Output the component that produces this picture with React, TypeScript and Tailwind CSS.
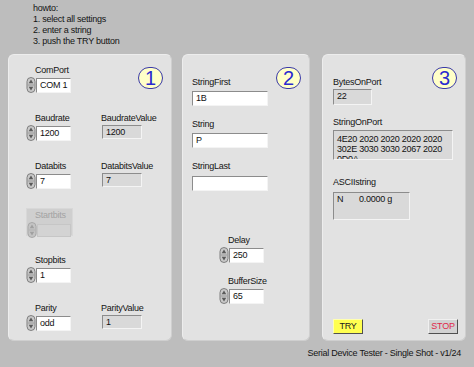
import React from 'react';

// Small LabVIEW-like increment/decrement arrows
function Spin({ dim = false }: { dim?: boolean }) {
    return (
        <svg width="10" height="16" viewBox="0 0 10 16" className="shrink-0">
            <rect x="1" y="0.5" width="8" height="15" rx="4" fill={dim ? '#c4c4c4' : '#c9c9c9'} stroke={dim ? '#a8a8a8' : '#7e7e7e'} />
            <path d="M5 2.5 L7.3 6.3 H2.7 Z" fill={dim ? '#a0a0a0' : '#5a5a5a'} />
            <path d="M5 13.5 L7.3 9.7 H2.7 Z" fill={dim ? '#a0a0a0' : '#5a5a5a'} />
            <line x1="2" y1="8" x2="8" y2="8" stroke={dim ? '#b0b0b0' : '#9a9a9a'} />
        </svg>
    );
}

function Label({ children, className = '' }: { children: React.ReactNode; className?: string }) {
    return <div className={`h-[11px] leading-[11px] whitespace-nowrap text-[#141414] ${className}`}>{children}</div>;
}

// sunken control / indicator box
function Box({ value = '', w, h = 15, gray = false }: { value?: string; w: number; h?: number; gray?: boolean }) {
    return (
        <div
            className={`border border-t-[#8c8c8c] border-l-[#8c8c8c] border-b-[#f4f4f4] border-r-[#f4f4f4] pl-[3px] leading-[13px] text-[#111] whitespace-pre overflow-hidden ${gray ? 'bg-[#d9d9d9]' : 'bg-white'}`}
            style={{ width: w, height: h }}
        >
            {value}
        </div>
    );
}

function NumCtl({ label, value }: { label: string; value: string }) {
    return (
        <div className="flex flex-col w-[75px]">
            <Label className="ml-[9px]">{label}</Label>
            <div className="flex items-center mt-[1px]">
                <Spin />
                <Box value={value} w={35} />
            </div>
        </div>
    );
}

function Indicator({ label, value }: { label: string; value: string }) {
    return (
        <div className="flex flex-col">
            <Label>{label}</Label>
            <div className="mt-[1px] ml-[1px]">
                <Box value={value} w={40} h={14} gray />
            </div>
        </div>
    );
}

function Badge({ n }: { n: string }) {
    return (
        <div className="absolute top-[12px] right-[8px] w-[25px] h-[22px] rounded-full bg-[#ffffc8] border-[1.5px] border-[#3a3aa8] flex items-center justify-center text-[20px] leading-none tracking-normal text-[#2a2ad0] font-['Liberation_Sans',sans-serif]">
            {n}
        </div>
    );
}

function Panel({ children, className = '' }: { children: React.ReactNode; className?: string }) {
    return (
        <div className={`relative h-[287px] shrink-0 rounded-[6px] bg-[#e2e2e2] border border-t-[#ededed] border-l-[#ededed] border-b-[#cfcfcf] border-r-[#cfcfcf] ${className}`}>
            {children}
        </div>
    );
}

export default function App() {
    return (
        <div className="w-[474px] h-[367px] bg-[#bdbdbd] overflow-hidden font-['Liberation_Sans',Arial,sans-serif] text-[9px] tracking-[-0.25px]">
            {/* howto */}
            <div className="pl-[33px] pt-[3px] leading-[11px] text-[#141414] h-[54px]">
                <div>howto:</div>
                <div>1. select all settings</div>
                <div>2. enter a string</div>
                <div>3. push the TRY button</div>
            </div>

            <div className="flex pl-[8px]">
                {/* Panel 1 - serial settings */}
                <Panel className="w-[164px] pl-[17px] pt-[10px]">
                    <Badge n="1" />
                    <div className="flex flex-col gap-[20px]">
                        <div className="flex">
                            <NumCtl label="ComPort" value="COM 1" />
                        </div>
                        <div className="flex">
                            <NumCtl label="Baudrate" value="1200" />
                            <Indicator label="BaudrateValue" value="1200" />
                        </div>
                        <div className="flex">
                            <NumCtl label="Databits" value="7" />
                            <Indicator label="DatabitsValue" value="7" />
                        </div>
                        {/* disabled control */}
                        <div className="w-[47px] h-[28px] -mt-[1px] bg-[#cfcfcf] border border-[#d8d8d8] pt-[1px]">
                            <Label className="ml-[8px] !text-[#a3a3a3]">Startbits</Label>
                            <div className="flex items-center mt-[1px]">
                                <Spin dim />
                                <div className="w-[34px] h-[13px] bg-[#d3d3d3] border border-[#c6c6c6]" />
                            </div>
                        </div>
                        <div className="flex -mt-[1px]">
                            <NumCtl label="Stopbits" value="1" />
                        </div>
                        <div className="flex">
                            <NumCtl label="Parity" value="odd" />
                            <Indicator label="ParityValue" value="1" />
                        </div>
                    </div>
                </Panel>

                {/* Panel 2 - strings */}
                <Panel className="w-[128px] ml-[10px] pl-[9px] pt-[22px]">
                    <Badge n="2" />
                    <div className="flex flex-col gap-[13px]">
                        <div>
                            <Label>StringFirst</Label>
                            <div className="mt-[3px]"><Box value="1B" w={76} /></div>
                        </div>
                        <div>
                            <Label>String</Label>
                            <div className="mt-[3px]"><Box value="P" w={76} /></div>
                        </div>
                        <div>
                            <Label>StringLast</Label>
                            <div className="mt-[4px]"><Box value="" w={76} /></div>
                        </div>
                    </div>
                    <div className="flex flex-col gap-[13px] ml-[27px] mt-[44px]">
                        <NumCtl label="Delay" value="250" />
                        <NumCtl label="BufferSize" value="65" />
                    </div>
                </Panel>

                {/* Panel 3 - results */}
                <Panel className="w-[144px] ml-[12px] pl-[10px] pt-[22px] flex flex-col">
                    <Badge n="3" />
                    <Label>BytesOnPort</Label>
                    <div className="mt-[1px]"><Box value="22" w={39} h={16} gray /></div>
                    <Label className="mt-[12px]">StringOnPort</Label>
                    <div className="mt-[2px] w-[120px] h-[30px] bg-[#d9d9d9] border border-t-[#8c8c8c] border-l-[#8c8c8c] border-b-[#f4f4f4] border-r-[#f4f4f4] pl-[3px] pt-[3px] leading-[10px] overflow-hidden whitespace-nowrap text-[#111]">
                        <div>4E20 2020 2020 2020 2020</div>
                        <div>302E 3030 3030 2067 2020</div>
                        <div>0D0A</div>
                    </div>
                    <Label className="mt-[17px]">ASCIIstring</Label>
                    <div className="mt-[4px]"><Box value={'N       0.0000 g'} w={77} h={28} gray /></div>
                    <div className="mt-auto mb-[6px] flex justify-between pr-[7px]">
                        <div className="w-[30px] h-[15px] bg-[#ffff50] border border-t-[#ffffb0] border-l-[#ffffb0] border-b-[#505050] border-r-[#505050] flex items-center justify-center text-[#202020]">
                            TRY
                        </div>
                        <div className="w-[30px] h-[15px] bg-[#d2d2d2] border border-t-[#f0f0f0] border-l-[#f0f0f0] border-b-[#505050] border-r-[#505050] flex items-center justify-center text-[#e0284a]">
                            STOP
                        </div>
                    </div>
                </Panel>
            </div>

            {/* footer */}
            <div className="flex justify-end pr-[13px] mt-[6px] leading-[12px] text-[#141414]">
                Serial Device Tester - Single Shot - v1/24
            </div>
        </div>
    );
}
